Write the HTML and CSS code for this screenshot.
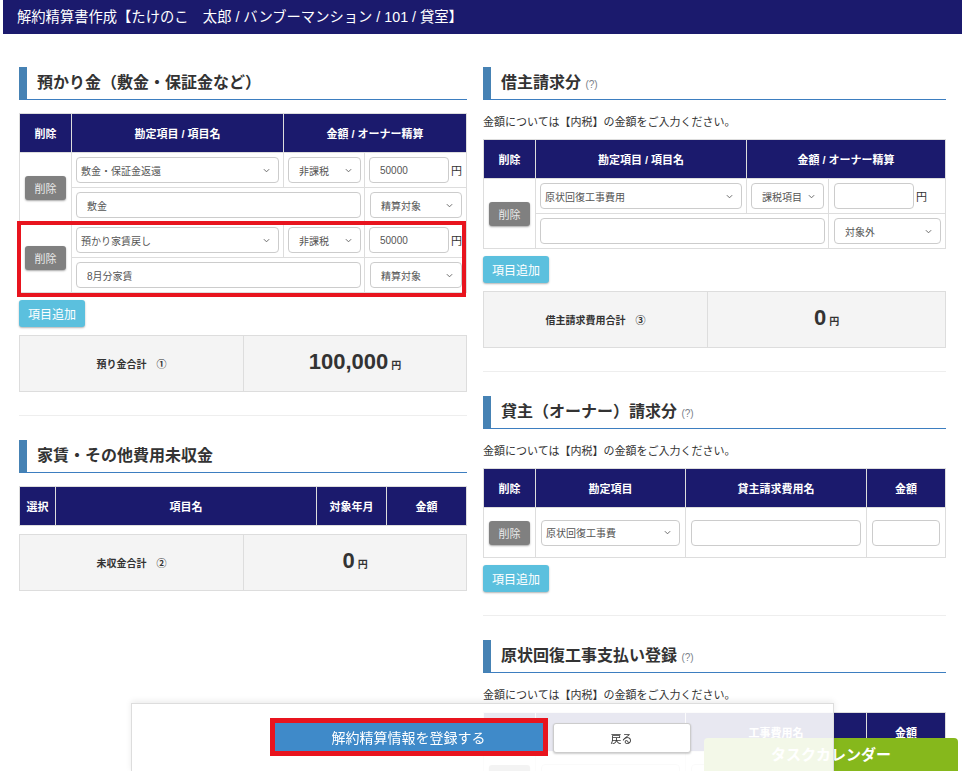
FILE: index.html
```html
<!DOCTYPE html>
<html lang="ja">
<head>
<meta charset="utf-8">
<title>解約精算書作成</title>
<link rel="stylesheet" href="styles.css">
</head>
<body>
<header class="topbar">解約精算書作成【たけのこ　太郎 / バンブーマンション / 101 / 貸室】</header>

<main class="page">
  <div class="col">
    <section class="sec">
      <h2 class="sec-title">預かり金（敷金・保証金など）</h2>
      <div class="tblwrap">
        <table class="grid">
          <colgroup><col class="w52"><col class="w212"><col class="w81"><col></colgroup>
          <thead><tr><th>削除</th><th>勘定項目 / 項目名</th><th colspan="2">金額 / オーナー精算</th></tr></thead>
          <tbody>
            <tr>
              <td rowspan="2" class="c"><button class="btn-del">削除</button></td>
              <td><div class="sel"><span>敷金・保証金返還</span><svg viewBox="0 0 8 5"><polyline points="1,1 4,4 7,1"/></svg></div></td>
              <td class="pr3"><div class="sel sel-pad"><span>非課税</span><svg viewBox="0 0 8 5"><polyline points="1,1 4,4 7,1"/></svg></div></td>
              <td><div class="amt"><input class="inp amt-inp" value="50000"><span>円</span></div></td>
            </tr>
            <tr>
              <td colspan="2" class="pr3"><input class="inp" value="敷金"></td>
              <td class="pl5"><div class="sel sel-pad"><span>精算対象</span><svg viewBox="0 0 8 5"><polyline points="1,1 4,4 7,1"/></svg></div></td>
            </tr>
            <tr>
              <td rowspan="2" class="c"><button class="btn-del">削除</button></td>
              <td><div class="sel"><span>預かり家賃戻し</span><svg viewBox="0 0 8 5"><polyline points="1,1 4,4 7,1"/></svg></div></td>
              <td class="pr3"><div class="sel sel-pad"><span>非課税</span><svg viewBox="0 0 8 5"><polyline points="1,1 4,4 7,1"/></svg></div></td>
              <td><div class="amt"><input class="inp amt-inp" value="50000"><span>円</span></div></td>
            </tr>
            <tr>
              <td colspan="2" class="pr3"><input class="inp" value="8月分家賃"></td>
              <td class="pl5"><div class="sel sel-pad"><span>精算対象</span><svg viewBox="0 0 8 5"><polyline points="1,1 4,4 7,1"/></svg></div></td>
            </tr>
          </tbody>
        </table>
        <div class="mark"></div>
      </div>
      <button class="btn-add">項目追加</button>
      <div class="total">
        <div class="total-label">預り金合計　①</div>
        <div class="total-val"><span class="num">100,000</span><span class="yen">円</span></div>
      </div>
    </section>
    <hr class="sep">
    <section class="sec">
      <h2 class="sec-title">家賃・その他費用未収金</h2>
      <table class="grid mt13">
        <colgroup><col class="w36"><col class="w261"><col class="w70"><col></colgroup>
        <thead><tr><th>選択</th><th>項目名</th><th>対象年月</th><th>金額</th></tr></thead>
      </table>
      <div class="total mt9">
        <div class="total-label">未収金合計　②</div>
        <div class="total-val"><span class="num">0</span><span class="yen">円</span></div>
      </div>
    </section>
  </div>

  <div class="col">
    <section class="sec">
      <h2 class="sec-title">借主請求分 <span class="help">(?)</span></h2>
      <p class="note">金額については【内税】の金額をご入力ください。</p>
      <table class="grid">
        <colgroup><col class="w52"><col class="w211"><col class="w82"><col></colgroup>
        <thead><tr><th>削除</th><th>勘定項目 / 項目名</th><th colspan="2">金額 / オーナー精算</th></tr></thead>
        <tbody>
          <tr>
            <td rowspan="2" class="c"><button class="btn-del">削除</button></td>
            <td><div class="sel"><span>原状回復工事費用</span><svg viewBox="0 0 8 5"><polyline points="1,1 4,4 7,1"/></svg></div></td>
            <td><div class="sel sel-pad"><span>課税項目</span><svg viewBox="0 0 8 5"><polyline points="1,1 4,4 7,1"/></svg></div></td>
            <td class="pl5"><div class="amt"><input class="inp amt-inp" value=""><span>円</span></div></td>
          </tr>
          <tr>
            <td colspan="2" class="pr3"><input class="inp" value=""></td>
            <td class="pl5"><div class="sel sel-pad"><span>対象外</span><svg viewBox="0 0 8 5"><polyline points="1,1 4,4 7,1"/></svg></div></td>
          </tr>
        </tbody>
      </table>
      <button class="btn-add">項目追加</button>
      <div class="total">
        <div class="total-label">借主請求費用合計　③</div>
        <div class="total-val"><span class="num">0</span><span class="yen">円</span></div>
      </div>
    </section>
    <hr class="sep">
    <section class="sec">
      <h2 class="sec-title">貸主（オーナー）請求分 <span class="help">(?)</span></h2>
      <p class="note">金額については【内税】の金額をご入力ください。</p>
      <table class="grid owner">
        <colgroup><col class="w52"><col class="w150"><col class="w181"><col></colgroup>
        <thead><tr><th>削除</th><th>勘定項目</th><th>貸主請求費用名</th><th>金額</th></tr></thead>
        <tbody>
          <tr>
            <td class="c"><button class="btn-del">削除</button></td>
            <td><div class="sel"><span>原状回復工事費</span><svg viewBox="0 0 8 5"><polyline points="1,1 4,4 7,1"/></svg></div></td>
            <td><input class="inp" value=""></td>
            <td><input class="inp" value=""></td>
          </tr>
        </tbody>
      </table>
      <button class="btn-add">項目追加</button>
    </section>
    <hr class="sep">
    <section class="sec">
      <h2 class="sec-title">原状回復工事支払い登録 <span class="help">(?)</span></h2>
      <p class="note">金額については【内税】の金額をご入力ください。</p>
      <table class="grid owner">
        <colgroup><col class="w52"><col class="w150"><col class="w181"><col></colgroup>
        <thead><tr><th>削除</th><th>勘定項目</th><th>工事費用名</th><th>金額</th></tr></thead>
        <tbody>
          <tr>
            <td class="c"><button class="btn-del">削除</button></td>
            <td><div class="sel"><span>原状回復工事費</span><svg viewBox="0 0 8 5"><polyline points="1,1 4,4 7,1"/></svg></div></td>
            <td><input class="inp" value=""></td>
            <td><input class="inp" value=""></td>
          </tr>
        </tbody>
      </table>
    </section>
  </div>
</main>

<a class="calendar">タスクカレンダー</a>
<div class="footer-bar">
  <button class="btn-submit">解約精算情報を登録する</button>
  <button class="btn-back">戻る</button>
</div>
</body>
</html>
```

FILE: styles.css
```css
* { box-sizing: border-box; }
html, body { margin: 0; padding: 0; overflow: hidden; }
body {
  font-family: "Liberation Sans", "Noto Sans CJK JP", sans-serif;
  color: #333;
  background: #fff;
  font-size: 11px;
  width: 962px;
  height: 771px;
}

.topbar {
  margin-left: 3px;
  height: 34px;
  background: #1b1a6d;
  color: #fff;
  font-size: 14.3px;
  line-height: 34px;
  padding-left: 14px;
  white-space: nowrap;
}

.page {
  display: grid;
  grid-template-columns: 448px 463px;
  column-gap: 16px;
  padding: 33px 0 0 19px;
  align-items: start;
}

.sec-title {
  margin: 0;
  height: 33px;
  border-left: 8px solid #4682b4;
  border-bottom: 1px solid #3d7ec0;
  padding-left: 10px;
  font-size: 16px;
  font-weight: bold;
  line-height: 32px;
  color: #333;
  white-space: nowrap;
}
.help {
  font-size: 10px;
  font-weight: normal;
  color: #7a7f8a;
}

.note {
  margin: 14px 0 9px;
  font-size: 11px;
  line-height: 16px;
  color: #333;
  white-space: nowrap;
}

.tblwrap { position: relative; margin-top: 13px; }
.mt13 { margin-top: 13px; }
.mt9 { margin-top: 9px; }

.grid {
  width: 100%;
  border-collapse: collapse;
  table-layout: fixed;
}
.w52 { width: 52px; }
.w212 { width: 212px; }
.w211 { width: 211px; }
.w81 { width: 81px; }
.w82 { width: 82px; }
.w36 { width: 36px; }
.w261 { width: 261px; }
.w70 { width: 70px; }
.w150 { width: 150px; }
.w181 { width: 181px; }

.grid th {
  height: 39px;
  background: #1b1a6d;
  color: #fff;
  font-size: 11px;
  font-weight: bold;
  text-align: center;
  border: 1px solid #ddd;
  padding: 0;
}
.grid td {
  border: 1px solid #ddd;
  padding: 4px;
  vertical-align: middle;
}
.grid td.pr3 { padding-right: 3px; }
.grid td.pl5 { padding-left: 5px; }
.grid td.c { text-align: center; }
.owner td { padding: 11px 5px; height: 50px; }
.owner td.c { padding: 0; }

.sel {
  display: flex;
  align-items: center;
  justify-content: space-between;
  width: 100%;
  height: 26px;
  border: 1px solid #ccc;
  border-radius: 4px;
  background: #fff;
  color: #555;
  font-size: 10px;
  padding: 0 8px 0 4px;
  white-space: nowrap;
  overflow: hidden;
}
.sel svg {
  width: 7px;
  height: 5px;
  flex: none;
  fill: none;
  stroke: #666;
  stroke-width: 1.1;
}
.sel-pad { padding-left: 10px; }

.inp {
  display: block;
  width: 100%;
  height: 26px;
  border: 1px solid #ccc;
  border-radius: 4px;
  background: #fff;
  color: #555;
  font-family: inherit;
  font-size: 10px;
  padding: 0 10px;
}

.amt {
  display: flex;
  align-items: center;
  gap: 2px;
  font-size: 11px;
  color: #333;
}
.amt .amt-inp { width: 80px; flex: none; }

.btn-del {
  width: 41px;
  height: 24px;
  border: none;
  border-radius: 3px;
  background: #808080;
  color: #eaeaea;
  font-family: inherit;
  font-size: 11px;
  padding: 0;
  box-shadow: 0 1px 2px rgba(0,0,0,0.35);
  vertical-align: middle;
}

.mark {
  position: absolute;
  left: -2px;
  top: 108px;
  width: 449px;
  height: 76px;
  border: 4px solid #e8141e;
  pointer-events: none;
}

.btn-add {
  display: block;
  margin-top: 7px;
  width: 66px;
  height: 27px;
  border: none;
  border-radius: 3px;
  background: #5bc0de;
  color: #fff;
  font-family: inherit;
  font-size: 12px;
  padding: 0;
  box-shadow: 0 1px 2px rgba(0,0,0,0.3);
}

.total {
  margin-top: 8px;
  display: grid;
  grid-template-columns: 224px 1fr;
  height: 57px;
  border: 1px solid #ddd;
  background: #f4f4f4;
}
.total-label {
  display: flex;
  align-items: center;
  justify-content: center;
  border-right: 1px solid #ddd;
  font-size: 10px;
  font-weight: bold;
  color: #333;
}
.total-val {
  display: flex;
  align-items: baseline;
  justify-content: center;
  padding-top: 12px;
  gap: 3px;
  color: #333;
}
.num {
  font-size: 22px;
  font-weight: bold;
  line-height: 28px;
}
.yen {
  font-size: 10px;
  font-weight: bold;
}

.sep {
  margin: 23px 0 24px;
  border: none;
  border-top: 1px solid #eee;
  height: 0;
}

.calendar {
  position: fixed;
  right: 4px;
  bottom: 0;
  width: 254px;
  height: 33px;
  background: #86b81c;
  color: #fff;
  font-size: 15px;
  font-weight: bold;
  line-height: 33px;
  text-align: center;
  border-radius: 4px 4px 0 0;
}

.footer-bar {
  position: fixed;
  left: 131px;
  bottom: -1px;
  width: 703px;
  height: 69px;
  background: rgba(255,255,255,0.9);
  border: 1px solid #ddd;
  box-shadow: 0 -2px 6px rgba(0,0,0,0.08);
  display: flex;
  justify-content: center;
  align-items: flex-start;
  gap: 10px;
  padding-top: 19px;
}
.btn-submit {
  width: 268px;
  height: 28px;
  border: none;
  background: #3f8ac9;
  color: #fff;
  font-family: inherit;
  font-size: 14px;
  padding: 0;
  outline: 5px solid #e8141e;
}
.btn-back {
  width: 138px;
  height: 30px;
  border: 1px solid #ccc;
  border-radius: 3px;
  background: #fff;
  color: #333;
  font-family: inherit;
  font-size: 11px;
  padding: 0;
  box-shadow: 0 1px 2px rgba(0,0,0,0.2);
}
```
